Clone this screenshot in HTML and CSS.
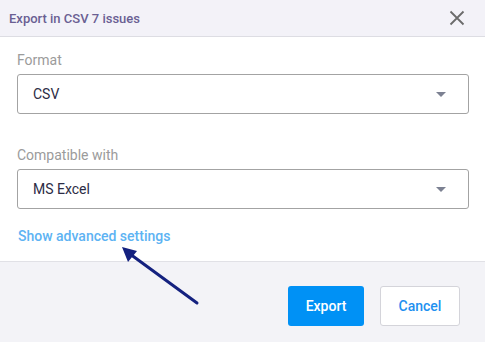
FILE: index.html
```html
<!DOCTYPE html>
<html lang="en">
<head>
    <meta charset="UTF-8">
    <meta name="viewport" content="width=device-width, initial-scale=1.0">
    <title>Export in CSV</title>
    <link rel="stylesheet" href="styles.css">
</head>
<body>
    <div class="dialog">
        <div class="dialog-header">
            <span class="dialog-title">Export in CSV 7 issues</span>
            <button class="close-btn" aria-label="Close">
                <svg width="16" height="16" viewBox="0 0 16 16">
                    <path d="M1.5 1.5 L14.5 14.5 M14.5 1.5 L1.5 14.5" stroke="#6b6b6b" stroke-width="1.8" fill="none"/>
                </svg>
            </button>
        </div>

        <div class="dialog-body">
            <div class="field">
                <label class="field-label">Format</label>
                <div class="select">
                    <span>CSV</span>
                    <span class="caret"></span>
                </div>
            </div>

            <div class="field">
                <label class="field-label">Compatible with</label>
                <div class="select">
                    <span>MS Excel</span>
                    <span class="caret"></span>
                </div>
            </div>

            <a class="advanced-link" href="#">Show advanced settings</a>
        </div>

        <div class="dialog-footer">
            <button class="btn btn-primary">Export</button>
            <button class="btn btn-secondary">Cancel</button>
        </div>

        <!-- annotation arrow -->
        <svg class="annotation" width="485" height="342" viewBox="0 0 485 342">
            <line x1="197" y1="303" x2="130" y2="254" stroke="#14217f" stroke-width="3" stroke-linecap="round"/>
            <polygon points="122,247 137,251 128,262" fill="#14217f"/>
        </svg>
    </div>
</body>
</html>
```

FILE: styles.css
```css
body {
    margin: 0;
    font-family: Roboto, 'Liberation Sans', Arial, sans-serif;
    background-color: #ffffff;
}

.dialog {
    position: relative;
    width: 485px;
    height: 342px;
    display: flex;
    flex-direction: column;
    background-color: #ffffff;
}

.dialog-header {
    height: 36px;
    display: flex;
    align-items: center;
    justify-content: space-between;
    padding: 0 20px 0 9px;
    background-color: #f3f2f8;
    border-bottom: 1px solid #dddde3;
}

.dialog-title {
    font-size: 13px;
    font-weight: 500;
    color: #6a5f93;
}

.close-btn {
    border: none;
    background: none;
    padding: 0;
    width: 16px;
    height: 16px;
    cursor: pointer;
    display: flex;
}

.dialog-body {
    flex: 1;
    padding: 13px 16px 0 17px;
}

.field {
    display: flex;
    flex-direction: column;
    gap: 4px;
    margin-bottom: 31px;
}

.field + .field {
    margin-bottom: 17px;
}

.field-label {
    font-size: 14px;
    line-height: 20px;
    color: #9b9b9b;
}

.select {
    height: 38px;
    border: 1px solid #a3a3a3;
    border-radius: 3px;
    display: flex;
    align-items: center;
    justify-content: space-between;
    padding: 0 22px 0 15px;
    font-size: 14px;
    color: #2c2c45;
}

.caret {
    width: 0;
    height: 0;
    border-left: 5px solid transparent;
    border-right: 5px solid transparent;
    border-top: 5px solid #7c8192;
}

.advanced-link {
    display: inline-block;
    font-size: 14px;
    line-height: 20px;
    font-weight: 500;
    color: #5db3f3;
    text-decoration: none;
    margin-left: 1px;
}

.dialog-footer {
    height: 81px;
    display: flex;
    justify-content: flex-end;
    align-items: flex-start;
    gap: 16px;
    padding: 24px 25px 0 0;
    box-sizing: border-box;
    background-color: #f3f3f7;
    border-top: 1px solid #e1e1e6;
}

.btn {
    height: 40px;
    border-radius: 3px;
    font-family: inherit;
    font-size: 14px;
    font-weight: 500;
    cursor: pointer;
}

.btn-primary {
    width: 76px;
    border: none;
    background-color: #0091f5;
    color: #ffffff;
}

.btn-secondary {
    width: 80px;
    border: 1px solid #d4d4da;
    background-color: #ffffff;
    color: #1e90f0;
}

.annotation {
    position: absolute;
    top: 0;
    left: 0;
    pointer-events: none;
}
```
